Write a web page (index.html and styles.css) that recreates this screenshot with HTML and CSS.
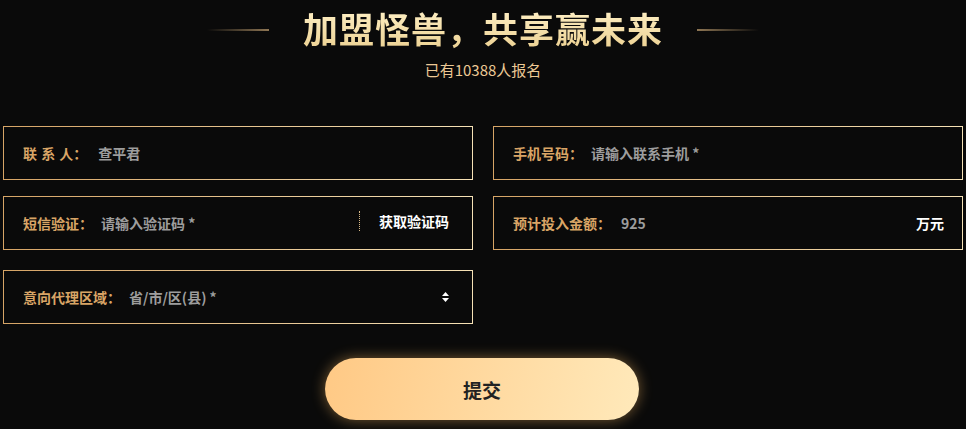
FILE: index.html
```html
<!DOCTYPE html>
<html lang="zh-CN">
<head>
    <meta charset="UTF-8">
    <meta name="viewport" content="width=device-width, initial-scale=1.0">
    <title>加盟怪兽</title>
    <link rel="stylesheet" href="styles.css">
</head>
<body>
    <div class="join">
        <div class="join-head">
            <span class="line line-left"></span>
            <h1>加盟怪兽，共享赢未来</h1>
            <span class="line line-right"></span>
        </div>
        <p class="join-count">已有10388人报名</p>

        <form class="join-form">
            <div class="field">
                <label class="spaced">联 系 人：</label>
                <span class="value filled">查平君</span>
            </div>
            <div class="field">
                <label>手机号码：</label>
                <span class="value">请输入联系手机 *</span>
            </div>
            <div class="field">
                <label>短信验证：</label>
                <span class="value">请输入验证码 *</span>
                <span class="code-btn">获取验证码</span>
            </div>
            <div class="field">
                <label>预计投入金额：</label>
                <span class="value filled num">925</span>
                <span class="unit">万元</span>
            </div>
            <div class="field">
                <label>意向代理区域：</label>
                <span class="value">省/市/区(县) *</span>
                <span class="arrows">
                    <svg width="7" height="10" viewBox="0 0 7 10"><path d="M3.5 0 L7 4 H0 Z M0 6 H7 L3.5 10 Z" fill="#fff"/></svg>
                </span>
            </div>
        </form>

        <div class="submit-wrap">
            <button class="submit" type="button">提交</button>
        </div>
    </div>
</body>
</html>
```

FILE: styles.css
```css
body {
    margin: 0;
    background-color: #0a0a0a;
    font-family: "Noto Sans CJK SC", "Noto Sans", sans-serif;
    height: 429px;
    overflow: hidden;
}

.join {
    padding: 0 3px;
}

/* Titulo */
.join-head {
    display: flex;
    align-items: center;
    justify-content: center;
    padding-top: 6px;
}

.join-head h1 {
    margin: 0 34px;
    font-size: 35px;
    line-height: 44px;
    font-weight: 700;
    color: #f7e2ae;
    background: linear-gradient(180deg, #fff1c8, #ecd192);
    -webkit-background-clip: text;
    background-clip: text;
    -webkit-text-fill-color: transparent;
    letter-spacing: 1px;
}

.line {
    display: block;
    width: 62px;
    height: 2px;
    margin-top: 4px;
}

.line-left {
    background: linear-gradient(90deg, rgba(140, 115, 80, 0), #8e7654);
}

.line-right {
    background: linear-gradient(90deg, #8e7654, rgba(140, 115, 80, 0));
}

.join-count {
    margin: 10px 0 0;
    text-align: center;
    font-size: 15px;
    line-height: 20px;
    color: #ecc995;
}

/* Formulario */
.join-form {
    display: grid;
    grid-template-columns: 1fr 1fr;
    column-gap: 20px;
    row-gap: 16px;
    margin-top: 46px;
}

.field {
    display: flex;
    align-items: center;
    height: 52px;
    padding: 0 19px;
    border: 1px solid transparent;
    background:
        linear-gradient(#0a0a0a, #0a0a0a) padding-box,
        linear-gradient(90deg, #d6a466, #f6e2b6) border-box;
    font-size: 14px;
    font-weight: 700;
}

.field label {
    color: #d9a566;
    margin-right: 8px;
    white-space: nowrap;
}

.field .spaced {
    word-spacing: 1px;
    margin-right: 11px;
}

.value {
    flex: 1;
    color: #9d9d9d;
}

.num {
    margin-left: 2px;
}

.code-btn {
    color: #fff;
    padding-left: 19px;
    border-left: 1px dotted #d8b987;
    line-height: 20px;
    margin-top: -4px;
    margin-right: 4px;
}

.unit {
    color: #fff;
    margin-right: -1px;
}

.arrows {
    display: flex;
    margin-right: 4px;
}

.join-form .field:nth-child(5) {
    margin-top: 4px;
}

/* Botao */
.submit-wrap {
    display: flex;
    justify-content: center;
    margin-top: 34px;
}

.submit {
    width: 314px;
    height: 62px;
    border: none;
    border-radius: 31px;
    margin-left: -2px;
    background: linear-gradient(100deg, #ffc985, #ffe9ba);
    box-shadow: 0 0 14px rgba(255, 190, 100, 0.45);
    font-family: inherit;
    font-size: 19px;
    font-weight: 700;
    color: #222;
    cursor: pointer;
}
```
